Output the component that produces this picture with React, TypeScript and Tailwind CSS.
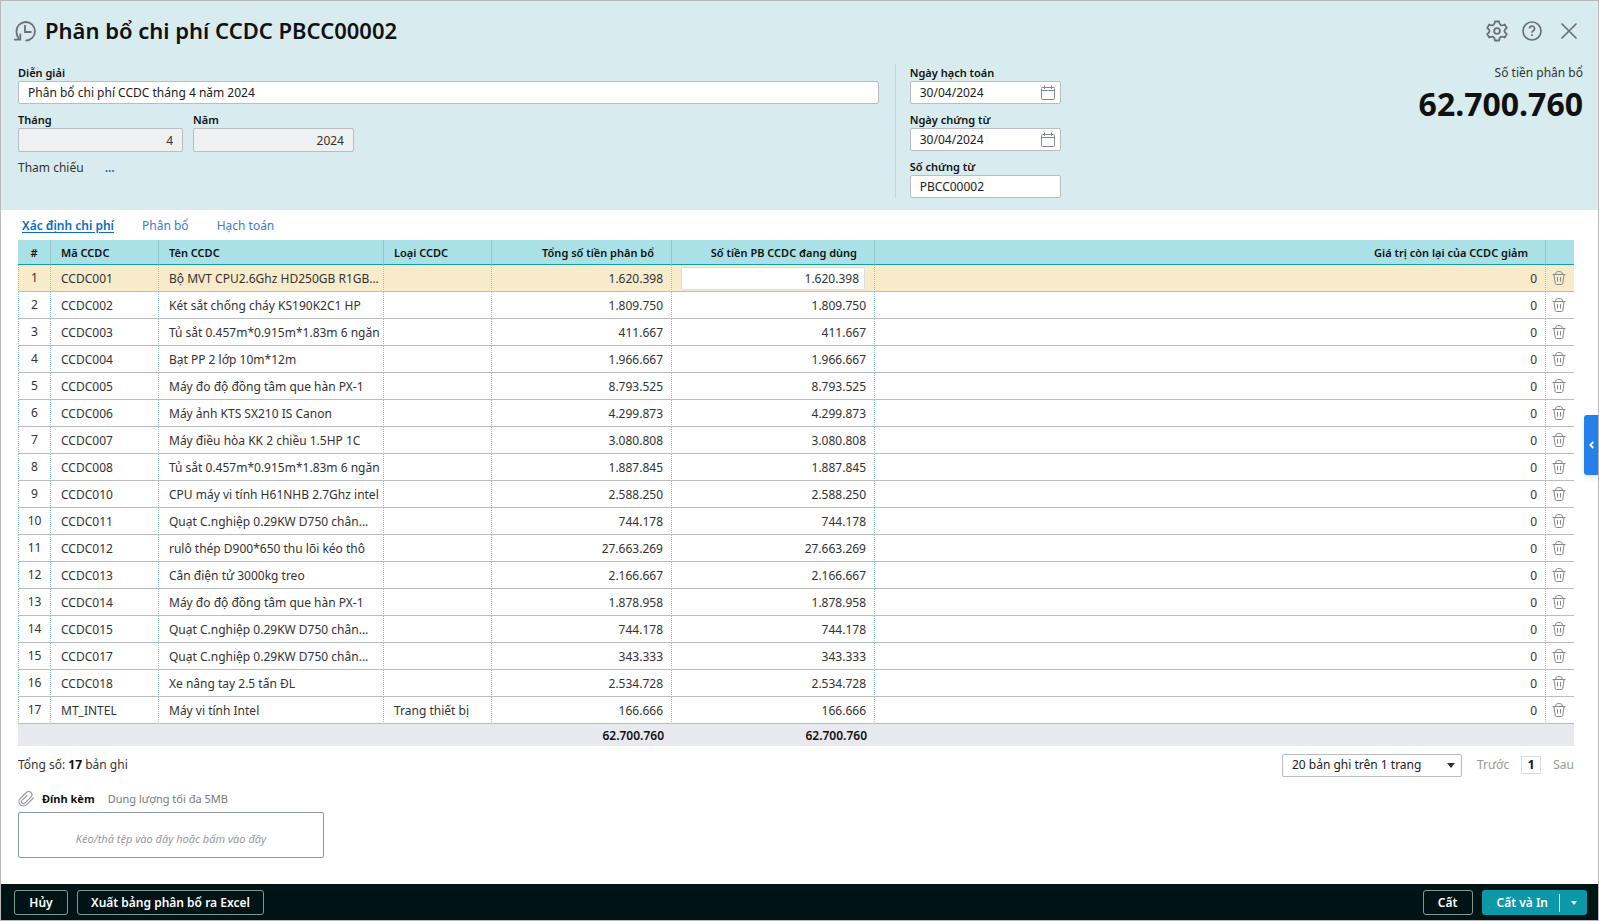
import React, { useState } from "react";

type Row = { code: string; name: string; kind?: string; amount: string };

const rows: Row[] = [
  { code: "CCDC001", name: "Bộ MVT CPU2.6Ghz HD250GB R1GB...", amount: "1.620.398" },
  { code: "CCDC002", name: "Két sắt chống cháy KS190K2C1 HP", amount: "1.809.750" },
  { code: "CCDC003", name: "Tủ sắt 0.457m*0.915m*1.83m 6 ngăn", amount: "411.667" },
  { code: "CCDC004", name: "Bạt PP 2 lớp 10m*12m", amount: "1.966.667" },
  { code: "CCDC005", name: "Máy đo độ đồng tâm que hàn PX-1", amount: "8.793.525" },
  { code: "CCDC006", name: "Máy ảnh KTS SX210 IS Canon", amount: "4.299.873" },
  { code: "CCDC007", name: "Máy điều hòa KK 2 chiều 1.5HP 1C", amount: "3.080.808" },
  { code: "CCDC008", name: "Tủ sắt 0.457m*0.915m*1.83m 6 ngăn", amount: "1.887.845" },
  { code: "CCDC010", name: "CPU máy vi tính H61NHB 2.7Ghz intel", amount: "2.588.250" },
  { code: "CCDC011", name: "Quạt C.nghiệp 0.29KW D750 chân...", amount: "744.178" },
  { code: "CCDC012", name: "rulô thép D900*650 thu lõi kéo thô", amount: "27.663.269" },
  { code: "CCDC013", name: "Cân điện tử 3000kg treo", amount: "2.166.667" },
  { code: "CCDC014", name: "Máy đo độ đồng tâm que hàn PX-1", amount: "1.878.958" },
  { code: "CCDC015", name: "Quạt C.nghiệp 0.29KW D750 chân...", amount: "744.178" },
  { code: "CCDC017", name: "Quạt C.nghiệp 0.29KW D750 chân...", amount: "343.333" },
  { code: "CCDC018", name: "Xe nâng tay 2.5 tấn ĐL", amount: "2.534.728" },
  { code: "MT_INTEL", name: "Máy vi tính Intel", kind: "Trang thiết bị", amount: "166.666" },
];

const tabs = ["Xác định chi phí", "Phân bổ", "Hạch toán"];

function HistoryIcon() {
  return (
    <svg className="size-6" viewBox="0 0 24 24" fill="none" stroke="#6c6f76" strokeWidth="1.8">
      <path d="M12.500 21.600A9.300 9.300 0 1 0 3.400 12.800Q3.700 17 6 20.200" />
      <path d="M12 6v7h6.500" />
      <path d="M1 20.600h6.300v-6" />
    </svg>
  );
}

function GearIcon() {
  return (
    <svg className="size-6" viewBox="0 0 24 24" fill="none" stroke="#6c6f76" strokeWidth="1.8" strokeLinejoin="round">
      <path d="M9.900 2.500h4.200q.2 2.800 1.700 3.600t3.900-.7l2.100 3.600q-2.400 1.500-2.400 3t2.400 3l-2.100 3.600q-2.400-1.500-3.900-.7t-1.700 3.600h-4.200q-.2-2.800-1.700-3.600t-3.900.7l-2.100-3.600q2.400-1.500 2.400-3t-2.400-3l2.100-3.600q2.400 1.500 3.900.7t1.700-3.600z" />
      <circle cx="12" cy="12" r="2.900" />
    </svg>
  );
}

function HelpIcon() {
  return (
    <svg className="size-5" viewBox="0 0 20 20" fill="none" stroke="#6c6f76" strokeWidth="1.7">
      <circle cx="10" cy="10" r="9" />
      <path d="M7.500 7.500a2.500 2.500 0 1 1 3.700 2.200c-.8.5-1.200.9-1.200 2" />
      <path d="M10 13.200v1.800" />
    </svg>
  );
}

function CloseIcon() {
  return (
    <svg className="size-[18px]" viewBox="0 0 18 18" fill="none" stroke="#6c6f76" strokeWidth="1.700">
      <path d="M1.500 1.500l15 15M16.500 1.500l-15 15" />
    </svg>
  );
}

function CalendarIcon() {
  return (
    <svg className="size-4" viewBox="0 0 16 16" fill="none" stroke="#85888e">
      <rect x="1.5" y="2.5" width="13" height="12" rx="1" />
      <path d="M1.500 5.500h13M4.500 0.500v3.500M11.500 0.500v3.500" />
    </svg>
  );
}

function TrashIcon() {
  return (
    <svg className="size-[14px]" viewBox="0 0 14 14" fill="none" stroke="#85888e">
      <path d="M0.500 3.500h13M3.500 3Q4 0.600 5.500 0.600h3Q10 0.600 10.500 3M2 4l1.200 8.300q.2 1.200 1.300 1.200h5q1.100 0 1.300-1.200L12 4M5.500 6v4.500M8.500 6v4.500" />
    </svg>
  );
}

function ClipIcon() {
  return (
    <svg className="size-4" viewBox="0 0 24 24" fill="none" stroke="#9a9da3" strokeWidth="1.8" strokeLinecap="round">
      <path d="M23 10.500l-10.200 10a6.600 6.600 0 0 1-9.400-9.300L12.600 2.300a4.800 4.800 0 0 1 6.800 6.800l-9.200 9a2.900 2.900 0 0 1-4.100-4.100l7.600-7.500" />
    </svg>
  );
}

function Field({ id, label, className = "", children }: { id: string; label: string; className?: string; children: React.ReactNode }) {
  return (
    <div className={`flex flex-col ${className}`}>
      <label htmlFor={id} className="h-[17px] text-[11px] leading-[18px] font-semibold text-[#111]">{label}</label>
      {children}
    </div>
  );
}

const inputBox = "h-[23px] w-full rounded-xs border border-[#b8bcc3] bg-white px-[9px] text-xs text-[#212121] outline-none";
const readOnlyBox = "h-6 w-full rounded-xs border border-[#b8bcc3] bg-[#eff0f2] px-[9px] text-right text-xs outline-none";

function DateField({ id, label }: { id: string; label: string }) {
  return (
    <Field id={id} label={label}>
      <div className="flex h-[23px] items-center rounded-xs border border-[#b8bcc3] bg-white pr-1">
        <input id={id} defaultValue="30/04/2024" className="h-full w-0 grow bg-transparent px-[9px] text-xs text-[#212121] outline-none" />
        <button type="button" aria-label={`Chọn ${label}`}><CalendarIcon /></button>
      </div>
    </Field>
  );
}

const th = "h-[25px] border-r border-b border-r-[#8fc9cf] border-b-[#0fa0ae] px-[10px] pt-[2px] font-semibold text-[#111]";
const td = "h-[27px] border-r border-b border-r-[#8cc7cc] border-b-[#bbbcbf] [border-right-style:dotted]";
const tdText = `${td} pt-[2px] pl-[10px]`;
const tdNumber = `${td} pt-[2px] pr-2 text-right`;

export default function App() {
  const [tab, setTab] = useState(0);
  return (
    <div className="flex min-h-screen flex-col border border-[#b9b9bb] bg-white font-['Noto_Sans',sans-serif] text-xs leading-[18px] text-[#333]">
      <header className="bg-[#d8ecef] pb-3">
        <div className="flex h-[63px] items-start pt-[13px] pr-5 pl-3">
          <button type="button" aria-label="Lịch sử" className="mt-[5px]"><HistoryIcon /></button>
          <h1 className="ml-2 text-[22px] leading-8 font-semibold text-[#111]">Phân bổ chi phí CCDC PBCC00002</h1>
          <div className="ml-auto flex h-[34px] items-center">
            <button type="button" aria-label="Thiết lập"><GearIcon /></button>
            <button type="button" aria-label="Trợ giúp" className="ml-[13px]"><HelpIcon /></button>
            <button type="button" aria-label="Đóng" className="ml-[18px]"><CloseIcon /></button>
          </div>
        </div>
        <div className="flex items-start pr-[15px] pl-[17px]">
          <div className="flex w-[55%] flex-col gap-[7px]">
            <Field id="desc" label="Diễn giải">
              <input id="desc" defaultValue="Phân bổ chi phí CCDC tháng 4 năm 2024" className={inputBox} />
            </Field>
            <div className="flex gap-[10px]">
              <Field id="month" label="Tháng" className="w-[165px]">
                <input id="month" readOnly value="4" className={readOnlyBox} />
              </Field>
              <Field id="year" label="Năm" className="w-[161px]">
                <input id="year" readOnly value="2024" className={readOnlyBox} />
              </Field>
            </div>
            <div className="flex gap-[21px]">
              <span>Tham chiếu</span>
              <a href="#ref" className="font-semibold text-[#0b6bbf]">...</a>
            </div>
          </div>
          <div className="ml-4 flex w-[166px] flex-col gap-[7px] border-l border-[#c5d5dc] pl-[14px]">
            <DateField id="posted" label="Ngày hạch toán" />
            <DateField id="issued" label="Ngày chứng từ" />
            <Field id="number" label="Số chứng từ">
              <input id="number" defaultValue="PBCC00002" className={inputBox} />
            </Field>
          </div>
          <div className="ml-auto text-right">
            <div>Số tiền phân bổ</div>
            <div className="text-[32px] leading-[44px] font-bold text-[#111]">62.700.760</div>
          </div>
        </div>
      </header>

      <main className="flex grow flex-col pr-6 pl-[17px]">
        <div role="tablist" className="flex h-[30px] items-center gap-7 pt-[2px] pl-1">
          {tabs.map((name, i) => (
            <button
              key={name}
              type="button"
              role="tab"
              aria-selected={tab === i}
              onClick={() => setTab(i)}
              className={tab === i ? "font-semibold text-[#0b6bbf] underline underline-offset-2" : "text-[#3d7cbf]"}
            >
              {name}
            </button>
          ))}
        </div>

        <table className="w-full table-fixed border-separate border-spacing-0">
          <colgroup>
            <col className="w-[33px]" />
            <col className="w-[108px]" />
            <col className="w-[225px]" />
            <col className="w-[108px]" />
            <col className="w-[180px]" />
            <col className="w-[203px]" />
            <col />
            <col className="w-[28px]" />
          </colgroup>
          <thead className="bg-[#aae1e6] text-[11px]">
            <tr>
              <th className={`${th} text-center`}>#</th>
              <th className={`${th} text-left`}>Mã CCDC</th>
              <th className={`${th} text-left`}>Tên CCDC</th>
              <th className={`${th} text-left`}>Loại CCDC</th>
              <th className={`${th} pr-[17px] text-right`}>Tổng số tiền phân bổ</th>
              <th className={`${th} pr-[17px] text-right`}>Số tiền PB CCDC đang dùng</th>
              <th className={`${th} pr-[17px] text-right`}>Giá trị còn lại của CCDC giảm</th>
              <th className="border-b border-b-[#0fa0ae]" aria-label="Xóa" />
            </tr>
          </thead>
          <tbody>
            {rows.map((row, i) => (
              <tr key={row.code} className={i === 0 ? "bg-[#f8ebcb]" : ""}>
                <td className={`${td} border-l border-l-[#8cc7cc] text-center [border-left-style:dotted]`}>{i + 1}</td>
                <td className={tdText}>{row.code}</td>
                <td className={`${tdText} whitespace-nowrap`}>{row.name}</td>
                <td className={tdText}>{row.kind}</td>
                <td className={tdNumber}>{row.amount}</td>
                {i === 0 ? (
                  <td className={`${td} px-[9px]`}>
                    <input
                      aria-label="Số tiền PB CCDC đang dùng"
                      defaultValue={row.amount}
                      className="block h-[23px] w-full rounded-xs border border-[#dcdde3] bg-white px-[5px] text-right outline-none"
                    />
                  </td>
                ) : (
                  <td className={tdNumber}>{row.amount}</td>
                )}
                <td className={tdNumber}>0</td>
                <td className="border-b border-b-[#bbbcbf]">
                  <button type="button" aria-label={`Xóa ${row.code}`} className="ml-[6px] block"><TrashIcon /></button>
                </td>
              </tr>
            ))}
          </tbody>
          <tfoot className="bg-[#e8e9ee] font-semibold text-[#111]">
            <tr>
              <td colSpan={4} className="h-[22px]" />
              <td className="pt-[2px] pr-2 text-right">62.700.760</td>
              <td className="pt-[2px] pr-2 text-right">62.700.760</td>
              <td colSpan={2} />
            </tr>
          </tfoot>
        </table>

        <div className="flex h-[38px] items-center">
          <div>Tổng số: <b className="text-[#111]">17</b> bản ghi</div>
          <div className="relative ml-auto flex w-[180px] items-center">
            <select aria-label="Số bản ghi trên trang" className="h-[23px] w-full appearance-none rounded-xs border border-[#b8bcc3] bg-white px-[9px] text-[#212121] outline-none">
              <option>20 bản ghi trên 1 trang</option>
              <option>50 bản ghi trên 1 trang</option>
            </select>
            <svg className="pointer-events-none absolute right-[7px] h-[5px] w-2" viewBox="0 0 8 5" fill="#333"><path d="M0 0h8L4 5z" /></svg>
          </div>
          <button type="button" className="ml-[15px] text-[#999]">Trước</button>
          <button type="button" className="mx-3 h-[18px] w-5 border border-[#dcdde0] leading-4 font-bold text-[#111]">1</button>
          <button type="button" className="text-[#999]">Sau</button>
        </div>

        <div className="flex h-[28px] items-center pt-[2px] text-[11px]">
          <ClipIcon />
          <span className="ml-2 font-bold text-[#111]">Đính kèm</span>
          <span className="ml-[13px] text-[#777]">Dung lượng tối đa 5MB</span>
        </div>
        <label className="flex h-[46px] w-[306px] cursor-pointer items-center justify-center rounded-xs border border-[#8a9a9b] pt-2 text-[11px] text-[#999] italic">
          Kéo/thả tệp vào đây hoặc bấm vào đây
          <input type="file" className="sr-only" />
        </label>
      </main>

      <footer className="flex h-9 items-center bg-[#001416] pt-px pr-[11px] pl-[13px] font-semibold text-white">
        <button type="button" className="h-[25px] w-[54px] rounded-[3px] border border-[#7f9a8f]">Hủy</button>
        <button type="button" className="ml-[9px] h-[25px] rounded-[3px] border border-[#7f9a8f] px-[13px]">Xuất bảng phân bổ ra Excel</button>
        <button type="button" className="ml-auto h-[25px] w-[50px] rounded-[3px] border border-[#7f9a8f]">Cất</button>
        <div className="ml-[9px] flex h-[25px] items-center rounded-[3px] bg-[#0b98a8]">
          <button type="button" className="pr-[11px] pl-[15px]">Cất và In</button>
          <span className="h-[18px] w-px bg-white" />
          <button type="button" aria-label="Tùy chọn khác" className="flex h-full w-[27px] items-center justify-center">
            <svg className="h-1 w-[6px]" viewBox="0 0 6 4" fill="#fff"><path d="M0 0h6L3 4z" /></svg>
          </button>
        </div>
      </footer>

      <button type="button" aria-label="Mở bảng bên" className="fixed top-[415px] right-px flex h-[60px] w-[14px] items-center justify-center rounded-l-[3px] bg-[#2680eb] shadow-md">
        <svg className="h-2 w-[5px]" viewBox="0 0 5 8" fill="none" stroke="#fff" strokeWidth="1.800"><path d="M4.300 1L1.300 4l3 3" /></svg>
      </button>
    </div>
  );
}
